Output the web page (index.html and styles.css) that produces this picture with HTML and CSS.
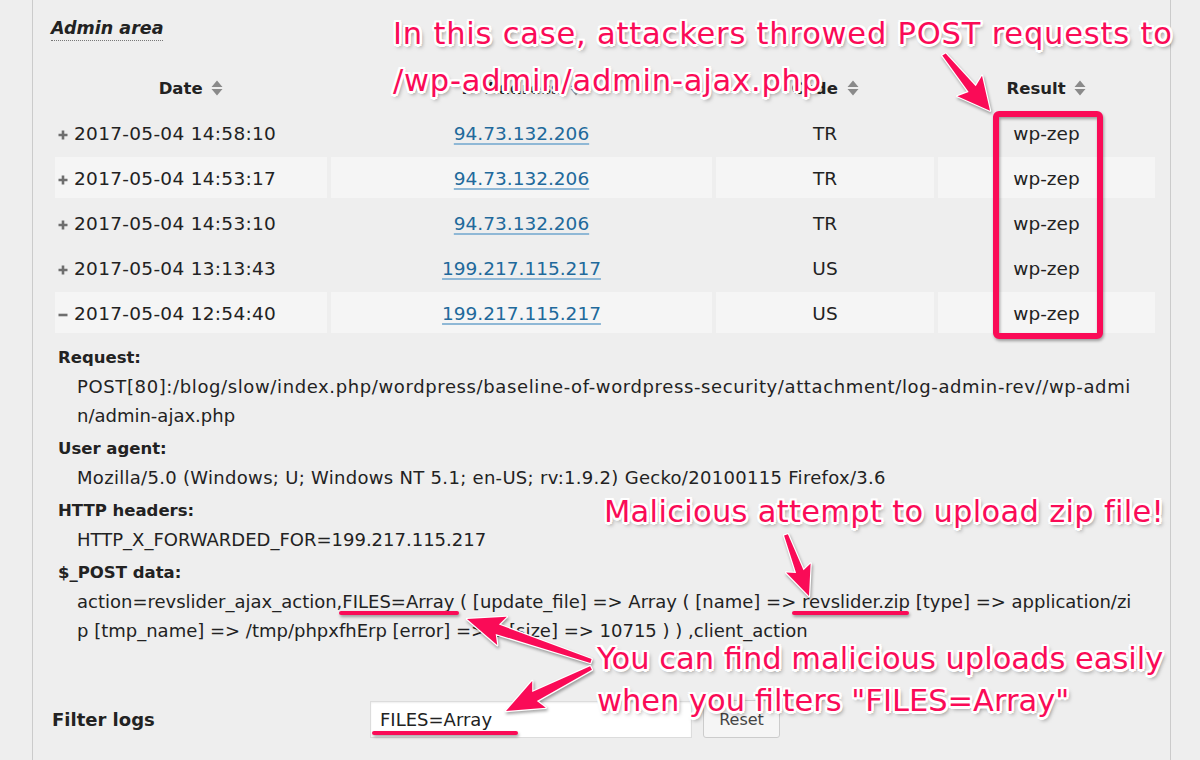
FILE: index.html
```html
<!DOCTYPE html>
<html lang="en">
<head>
<meta charset="utf-8">
<title>Admin area log</title>
<link rel="stylesheet" href="styles.css">
</head>
<body>
<div class="page">
  <div class="panel">
    <h2 class="section-title">Admin area</h2>
    <table class="log-table">
      <colgroup>
        <col class="w-date"><col class="w-ip"><col class="w-code"><col class="w-result">
      </colgroup>
      <thead>
        <tr>
          <th>Date <svg class="sort" width="12" height="16" viewBox="0 0 12 16"><path d="M6 0.5L11.5 7H0.5Z M0.5 9H11.5L6 15.5Z"/></svg></th>
          <th>IP Address <svg class="sort" width="12" height="16" viewBox="0 0 12 16"><path d="M6 0.5L11.5 7H0.5Z M0.5 9H11.5L6 15.5Z"/></svg></th>
          <th>Code <svg class="sort" width="12" height="16" viewBox="0 0 12 16"><path d="M6 0.5L11.5 7H0.5Z M0.5 9H11.5L6 15.5Z"/></svg></th>
          <th>Result <svg class="sort" width="12" height="16" viewBox="0 0 12 16"><path d="M6 0.5L11.5 7H0.5Z M0.5 9H11.5L6 15.5Z"/></svg></th>
        </tr>
      </thead>
      <tbody>
        <tr>
          <td class="c-date"><svg class="toggle" width="10" height="10" viewBox="0 0 10 10"><path d="M5 0.5V9.5M0.5 5H9.5"/></svg>2017-05-04 14:58:10</td>
          <td><a class="ip" href="#">94.73.132.206</a></td>
          <td>TR</td>
          <td>wp-zep</td>
        </tr>
        <tr class="alt">
          <td class="c-date"><svg class="toggle" width="10" height="10" viewBox="0 0 10 10"><path d="M5 0.5V9.5M0.5 5H9.5"/></svg>2017-05-04 14:53:17</td>
          <td><a class="ip" href="#">94.73.132.206</a></td>
          <td>TR</td>
          <td>wp-zep</td>
        </tr>
        <tr>
          <td class="c-date"><svg class="toggle" width="10" height="10" viewBox="0 0 10 10"><path d="M5 0.5V9.5M0.5 5H9.5"/></svg>2017-05-04 14:53:10</td>
          <td><a class="ip" href="#">94.73.132.206</a></td>
          <td>TR</td>
          <td>wp-zep</td>
        </tr>
        <tr>
          <td class="c-date"><svg class="toggle" width="10" height="10" viewBox="0 0 10 10"><path d="M5 0.5V9.5M0.5 5H9.5"/></svg>2017-05-04 13:13:43</td>
          <td><a class="ip" href="#">199.217.115.217</a></td>
          <td>US</td>
          <td>wp-zep</td>
        </tr>
        <tr class="alt">
          <td class="c-date"><svg class="toggle" width="10" height="10" viewBox="0 0 10 10"><path d="M0.5 5H9.5"/></svg>2017-05-04 12:54:40</td>
          <td><a class="ip" href="#">199.217.115.217</a></td>
          <td>US</td>
          <td>wp-zep</td>
        </tr>
      </tbody>
    </table>

    <div class="details">
      <div class="detail">
        <div class="label">Request:</div>
        <div class="value value-loose">POST[80]:/blog/slow/index.php/wordpress/baseline-of-wordpress-security/attachment/log-admin-rev//wp-admi</div>
        <div class="value">n/admin-ajax.php</div>
      </div>
      <div class="detail">
        <div class="label">User agent:</div>
        <div class="value value-mid">Mozilla/5.0 (Windows; U; Windows NT 5.1; en-US; rv:1.9.2) Gecko/20100115 Firefox/3.6</div>
      </div>
      <div class="detail">
        <div class="label">HTTP headers:</div>
        <div class="value">HTTP_X_FORWARDED_FOR=199.217.115.217</div>
      </div>
      <div class="detail">
        <div class="label">$_POST data:</div>
        <div class="value">action=revslider_ajax_action,FILES=Array ( [update_file] =&gt; Array ( [name] =&gt; revslider.zip [type] =&gt; application/zi</div>
        <div class="value">p [tmp_name] =&gt; /tmp/phpxfhErp [error] =&gt; 0 [size] =&gt; 10715 ) ) ,client_action</div>
      </div>
    </div>

    <div class="filter">
      <label class="filter-label" for="flt">Filter logs</label>
      <input id="flt" class="filter-input" type="text" value="FILES=Array">
      <button class="btn" type="button">Reset</button>
    </div>
  </div>

  <svg class="marks" width="1200" height="760" viewBox="0 0 1200 760">
    <rect class="mark-box" x="996" y="114" width="104" height="222" rx="3"/>
    <polygon class="mark-arrow" points="942.3,55.5 968.7,92 957.4,96.2 990,110.7 982,75.8 975.7,86.2 945.7,53.5"/>
    <polygon class="mark-arrow" points="784.1,535.5 796.1,573.1 786.2,572.6 809,596 810.6,563.4 803.5,570.3 787.9,534.3"/>
    <polygon class="mark-arrow" points="591.6,659.1 498.9,624.6 506.8,616.7 467,619 497.2,645.1 495.7,634 590.4,662.9"/>
    <polygon class="mark-arrow" points="590.1,666.2 532.2,692.1 532.2,680.9 506,711 545.8,707.7 536.8,701.1 591.9,669.8"/>
    <line class="mark-line" x1="341" y1="613" x2="457" y2="613"/>
    <line class="mark-line" x1="794" y1="613" x2="907" y2="613"/>
    <line class="mark-line" x1="374" y1="733" x2="516" y2="733"/>
  </svg>

  <div class="note note-top">In this case, attackers throwed POST requests to<br>/wp-admin/admin-ajax.php</div>
  <div class="note note-mid">Malicious attempt to upload zip file!</div>
  <div class="note note-bottom">You can find malicious uploads easily<br>when you filters "FILES=Array"</div>
</div>
</body>
</html>
```

FILE: styles.css
```css
* {
  box-sizing: border-box;
}

html,
body {
  margin: 0;
  padding: 0;
}

body {
  background: #eeeeee;
  font-family: "DejaVu Sans", "Liberation Sans", sans-serif;
  color: #222222;
}

.page {
  position: relative;
  width: 1200px;
  height: 760px;
  overflow: hidden;
}

.panel {
  margin-left: 32px;
  width: 1139px;
  height: 760px;
  border-left: 1px solid #cbcbcb;
  border-right: 1px solid #cbcbcb;
  padding: 16px 11px 0 18px;
}

.section-title {
  display: table;
  margin: 0;
  font-size: 17.5px;
  font-weight: bold;
  font-style: italic;
  line-height: 24px;
  border-bottom: 1px dotted #777777;
  color: #222222;
}

.log-table {
  margin-top: 25px;
  width: 1108px;
  table-layout: fixed;
  border-collapse: separate;
  border-spacing: 4px;
}

.w-date { width: 272px; }
.w-ip { width: 381px; }
.w-code { width: 218px; }
.w-result { width: 217px; }

.log-table th {
  padding: 9px 0;
  line-height: 20px;
  font-size: 16.5px;
  font-weight: bold;
  text-align: center;
  color: #222222;
  white-space: nowrap;
}

.sort {
  display: inline-block;
  vertical-align: -2px;
  margin-left: 3px;
  fill: #8a8a8a;
}

.log-table td {
  padding: 12px 3px 9px;
  line-height: 20px;
  font-size: 18.5px;
  text-align: center;
  white-space: nowrap;
}

.log-table td.c-date {
  text-align: left;
  letter-spacing: 0.3px;
}

.log-table tr.alt td {
  background: #f5f5f5;
}

.toggle {
  display: inline-block;
  margin-right: 6px;
  vertical-align: 0px;
  stroke: #6e6e6e;
  stroke-width: 2.6;
  fill: none;
}

.ip {
  color: #21699b;
  text-decoration: underline;
  text-decoration-color: #8fb8d6;
  text-decoration-thickness: 2px;
  text-underline-offset: 3px;
}

.details {
  margin-top: 7px;
  padding-left: 7px;
}

.detail + .detail {
  margin-top: 5px;
}

.label {
  font-size: 16.5px;
  font-weight: bold;
  line-height: 28px;
}

.value {
  padding-left: 19px;
  font-size: 18px;
  line-height: 29px;
  white-space: nowrap;
}

.value-loose {
  letter-spacing: 0.62px;
}

.value-mid {
  letter-spacing: 0.3px;
}

.filter {
  display: flex;
  align-items: center;
  margin-top: 55px;
}

.filter-label {
  width: 319px;
  padding-left: 1px;
  font-size: 18px;
  font-weight: bold;
}

.filter-input {
  width: 322px;
  height: 37px;
  margin: 0;
  padding: 0 9px;
  border: 1px solid #dcdcdc;
  background: #ffffff;
  font-family: "DejaVu Sans", "Liberation Sans", sans-serif;
  font-size: 18px;
  color: #222222;
  box-shadow: inset 0 1px 2px rgba(0, 0, 0, 0.07);
}

.btn {
  margin-left: 11px;
  width: 77px;
  height: 38px;
  border: 1px solid #cccccc;
  border-radius: 3px;
  background: #f5f5f5;
  font-family: "DejaVu Sans", "Liberation Sans", sans-serif;
  font-size: 16px;
  color: #444444;
}

.marks {
  position: absolute;
  left: 0;
  top: 0;
  pointer-events: none;
  filter: drop-shadow(1px 2px 1.5px rgba(0, 0, 0, 0.35));
}

.mark-box {
  fill: none;
  stroke: #fa0b57;
  stroke-width: 6;
}

.mark-arrow {
  fill: #fa0b57;
  stroke: #ffffff;
  stroke-width: 2.5;
  stroke-linejoin: round;
  paint-order: stroke;
}

.mark-line {
  stroke: #fa0b57;
  stroke-width: 4;
  stroke-linecap: round;
}

.note {
  position: absolute;
  white-space: nowrap;
  font-family: "DejaVu Sans", "Liberation Sans", sans-serif;
  font-size: 30.5px;
  color: #fa0b57;
  text-shadow:
    -2px -2px 0 #fff, 2px -2px 0 #fff, -2px 2px 0 #fff, 2px 2px 0 #fff,
    0 -2.5px 0 #fff, 0 2.5px 0 #fff, -2.5px 0 0 #fff, 2.5px 0 0 #fff,
    2px 3px 4px rgba(0, 0, 0, 0.55);
}

.note-top {
  left: 393px;
  top: 10px;
  line-height: 47px;
  letter-spacing: 0.8px;
}

.note-mid {
  left: 604px;
  top: 489px;
  line-height: 46px;
  letter-spacing: 0.3px;
}

.note-bottom {
  left: 597px;
  top: 638px;
  line-height: 42px;
}
```
